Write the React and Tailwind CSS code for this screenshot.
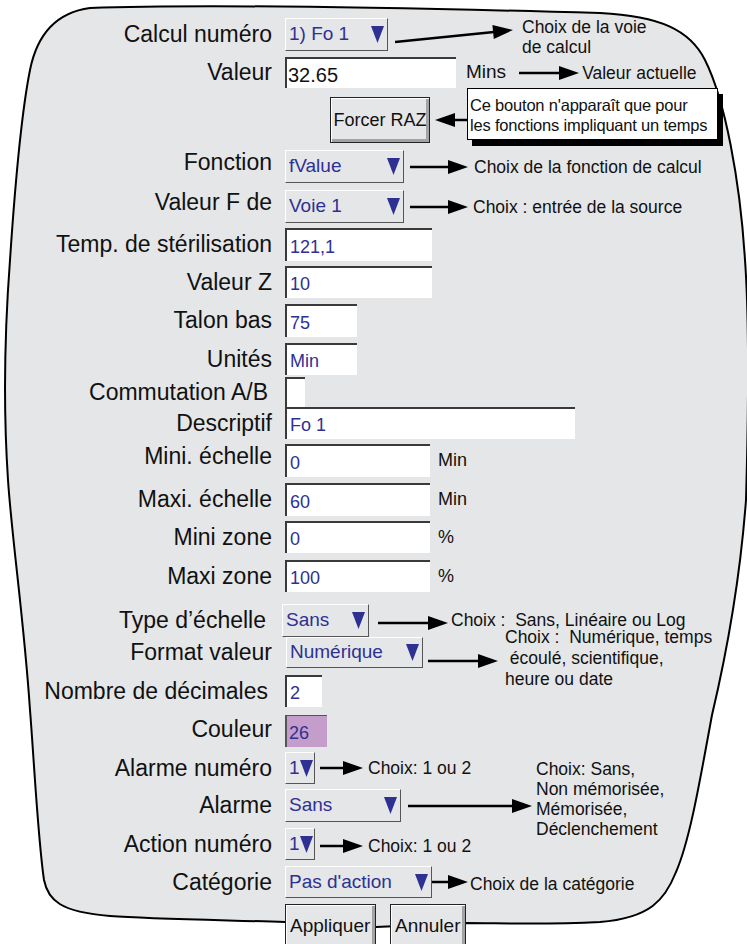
import React from 'react';

const OUTLINE =
  'M 90 8 C 200 4, 420 8, 600 13 C 660 16, 690 30, 705 60 C 725 100, 740 180, 745 260 ' +
  'C 750 330, 748 430, 746 500 C 740 580, 725 660, 712 715 C 700 780, 690 840, 676 872 ' +
  'C 665 900, 650 918, 600 922 C 540 925, 500 923, 466 923 L 376 927 L 285 922 ' +
  'C 220 920, 150 919, 110 916 C 60 912, 48 900, 44 880 C 38 840, 34 760, 30 710 ' +
  'C 24 620, 12 540, 8 480 C 4 420, 4 340, 10 260 C 14 200, 20 120, 30 70 C 38 30, 60 12, 90 8 Z';

function Tri() {
  return (
    <svg width="13" height="17" viewBox="0 0 13 17" className="shrink-0">
      <polygon points="0,0 13,0 6.5,17" fill="#2e3192" />
    </svg>
  );
}

function Arrow({ w, left = false, className = '' }) {
  return (
    <svg width={w} height="14" viewBox={`0 0 ${w} 14`} className={`shrink-0 ${className}`}>
      {left ? (
        <>
          <line x1="18" y1="7" x2={w} y2="7" stroke="#000" strokeWidth="2.5" />
          <polygon points="0,7 20,0 20,14" fill="#000" />
        </>
      ) : (
        <>
          <line x1="0" y1="7" x2={w - 18} y2="7" stroke="#000" strokeWidth="2.5" />
          <polygon points={`${w - 20},0 ${w},7 ${w - 20},14`} fill="#000" />
        </>
      )}
    </svg>
  );
}

function Select({ value, className = '' }) {
  return (
    <div
      className={`h-full flex items-center justify-between bg-[#e5e6e8] border border-t-white border-l-white border-r-[#555] border-b-[#555] pl-[3px] pr-[3px] text-[19px] text-[#2e3192] whitespace-nowrap ${className}`}
    >
      <span>{value}</span>
      <Tri />
    </div>
  );
}

function Input({ value, className = '' }) {
  return (
    <div
      className={`h-full flex items-center bg-white border-t-2 border-l-2 border-[#3a3a3a] pl-[3px] pt-[3px] text-[18px] text-[#2e3192] whitespace-nowrap ${className}`}
    >
      {value}
    </div>
  );
}

function Note({ children, className = '' }) {
  return <div className={`text-[17.5px] text-[#111] whitespace-pre leading-[20px] ${className}`}>{children}</div>;
}

function Row({ rowH, fieldH, label, labelCls = '', fieldCls = 'ml-[13px]', children }) {
  return (
    <div className={`flex shrink-0 ${rowH}`}>
      <div
        className={`w-[272px] ${fieldH} flex items-center justify-end text-[23px] leading-none text-[#111] whitespace-nowrap ${labelCls}`}
      >
        {label}
      </div>
      <div className={`${fieldH} flex items-center ${fieldCls}`}>{children}</div>
    </div>
  );
}

function Btn({ children, className = '' }) {
  return (
    <div
      className={`bg-[#e5e6e8] border border-[#222] shadow-[inset_1px_1px_0_#fff,inset_-3px_-3px_0_#a3a3a3] text-[#111] whitespace-nowrap ${className}`}
    >
      {children}
    </div>
  );
}

export default function App() {
  return (
    <div className="relative w-[747px] h-[944px] overflow-hidden bg-white font-['Liberation_Sans',Arial,sans-serif]">
      <svg className="absolute inset-0" width="747" height="944" viewBox="0 0 747 944">
        <path d={OUTLINE} fill="#e5e6e8" stroke="#000" strokeWidth="2" />
      </svg>

      <div className="relative flex flex-col pt-[18px]">
        <Row rowH="h-[39px]" fieldH="h-[33px]" label="Calcul numéro">
          <Select value="1) Fo 1" className="w-[103px]" />
          <svg width="120" height="33" viewBox="0 0 120 33" className="shrink-0 ml-[7px] self-start">
            <line x1="0" y1="24" x2="99" y2="14" stroke="#000" strokeWidth="2.5" />
            <polygon points="118,12 98.8,21 97.4,7" fill="#000" />
          </svg>
          <Note className="self-start mt-[-1px] ml-[7px]">{'Choix de la voie\nde calcul'}</Note>
        </Row>

        <Row rowH="h-[40px]" fieldH="h-[31px]" label="Valeur">
          <div className="h-full w-[171px] flex items-center bg-white border-t-2 border-l-2 border-[#3a3a3a] pl-[1px] pt-[2px] text-[20px] text-[#111]">
            32.65
          </div>
          <span className="ml-[10px] text-[19px] text-[#111]">Mins</span>
          <Arrow w={60} className="ml-[13px]" />
          <Note className="ml-[3px]">Valeur actuelle</Note>
        </Row>

        <Row rowH="h-[53px]" fieldH="h-[46px]" label="">
          <Btn className="ml-[45px] w-[100px] h-full flex items-center justify-center text-[18px]">Forcer RAZ</Btn>
          <Arrow w={32} left className="ml-[5px]" />
          <div className="self-start mt-[-9px] w-[251px] h-[52px] bg-white border border-black shadow-[5px_6px_0_#000] pl-[2px] pt-[6px] text-[16.5px] leading-[20px] text-[#111] whitespace-nowrap tracking-[-0.2px]">
            <div>Ce bouton n'apparaît que pour</div>
            <div>les fonctions impliquant un temps</div>
          </div>
        </Row>

        <Row rowH="h-[40px]" fieldH="h-[33px]" label="Fonction" labelCls="pb-[8px]">
          <Select value="fValue" className="w-[119px]" />
          <Arrow w={58} className="ml-[6px]" />
          <Note className="ml-[6px]">Choix de la fonction de calcul</Note>
        </Row>

        <Row rowH="h-[38px]" fieldH="h-[33px]" label="Valeur F de" labelCls="pb-[8px]">
          <Select value="Voie 1" className="w-[119px]" />
          <Arrow w={58} className="ml-[6px]" />
          <Note className="ml-[5px]">Choix : entrée de la source</Note>
        </Row>

        <Row rowH="h-[38px]" fieldH="h-[33px]" label="Temp. de stérilisation">
          <Input value="121,1" className="w-[147px]" />
        </Row>

        <Row rowH="h-[38px]" fieldH="h-[32px]" label="Valeur Z">
          <Input value="10" className="w-[147px]" />
        </Row>

        <Row rowH="h-[39px]" fieldH="h-[33px]" label="Talon bas">
          <Input value="75" className="w-[72px]" />
        </Row>

        <Row rowH="h-[34px]" fieldH="h-[32px]" label="Unités">
          <Input value="Min" className="w-[72px]" />
        </Row>

        <Row rowH="h-[30px]" fieldH="h-[31px]" label="Commutation A/B" labelCls="pr-[4px]">
          <Input value="" className="w-[20px]" />
        </Row>

        <Row rowH="h-[37px]" fieldH="h-[32px]" label="Descriptif">
          <Input value="Fo 1" className="w-[290px]" />
        </Row>

        <Row rowH="h-[39px]" fieldH="h-[33px]" label="Mini. échelle" labelCls="pb-[8px]">
          <Input value="0" className="w-[145px]" />
          <span className="ml-[8px] text-[18px] text-[#111]">Min</span>
        </Row>

        <Row rowH="h-[38px]" fieldH="h-[33px]" label="Maxi. échelle">
          <Input value="60" className="w-[145px]" />
          <span className="ml-[8px] text-[18px] text-[#111]">Min</span>
        </Row>

        <Row rowH="h-[39px]" fieldH="h-[32px]" label="Mini zone">
          <Input value="0" className="w-[145px]" />
          <span className="ml-[8px] text-[18px] text-[#111]">%</span>
        </Row>

        <Row rowH="h-[44px]" fieldH="h-[32px]" label="Maxi zone">
          <Input value="100" className="w-[145px]" />
          <span className="ml-[8px] text-[18px] text-[#111]">%</span>
        </Row>

        <Row rowH="h-[33px]" fieldH="h-[33px]" label="Type d’échelle" labelCls="pr-[6px]" fieldCls="ml-[10px]">
          <Select value="Sans" className="w-[87px]" />
          <Arrow w={70} className="ml-[9px] mt-[4px]" />
          <Note className="ml-[3px] mt-[-2px]">{'Choix :  Sans, Linéaire ou Log'}</Note>
        </Row>

        <Row rowH="h-[38px]" fieldH="h-[31px]" label="Format valeur" fieldCls="ml-[14px]">
          <Select value="Numérique" className="w-[137px]" />
          <Arrow w={70} className="ml-[5px] mt-[16px]" />
          <Note className="self-start mt-[-10px] ml-[7px] leading-[21px]">
            {'Choix :  Numérique, temps\n écoulé, scientifique,\nheure ou date'}
          </Note>
        </Row>

        <Row rowH="h-[40px]" fieldH="h-[32px]" label="Nombre de décimales" labelCls="pr-[4px]">
          <Input value="2" className="w-[37px]" />
        </Row>

        <Row rowH="h-[37px]" fieldH="h-[32px]" label="Couleur" labelCls="pb-[4px]">
          <div className="h-full w-[42px] flex items-center bg-[#c49dca] border-t border-l-2 border-[#555] pl-[2px] pt-[3px] text-[18px] text-[#2e3192]">
            26
          </div>
        </Row>

        <Row rowH="h-[37px]" fieldH="h-[32px]" label="Alarme numéro">
          <Select value="1" className="w-[30px] pl-[2px] pr-[1px]" />
          <Arrow w={43} className="ml-[5px]" />
          <Note className="ml-[5px]">Choix: 1 ou 2</Note>
        </Row>

        <Row rowH="h-[39px]" fieldH="h-[33px]" label="Alarme">
          <Select value="Sans" className="w-[116px]" />
          <Arrow w={124} className="ml-[7px]" />
          <Note className="self-start mt-[-30px] ml-[4px] leading-[19.5px]">
            {'Choix: Sans,\nNon mémorisée,\nMémorisée,\nDéclenchement'}
          </Note>
        </Row>

        <Row rowH="h-[38px]" fieldH="h-[32px]" label="Action numéro">
          <Select value="1" className="w-[30px] pl-[2px] pr-[1px]" />
          <Arrow w={43} className="ml-[5px] mt-[4px]" />
          <Note className="ml-[5px] mt-[4px]">Choix: 1 ou 2</Note>
        </Row>

        <Row rowH="h-[38px]" fieldH="h-[32px]" label="Catégorie">
          <Select value="Pas d'action" className="w-[147px]" />
          <Arrow w={36} />
          <Note className="ml-[2px] mt-[4px]">Choix de la catégorie</Note>
        </Row>

        <div className="flex">
          <div className="w-[272px]" />
          <div className="ml-[13px] flex">
            <Btn className="w-[91px] h-[50px] pl-[4px] pt-[7px] text-[19px]">Appliquer</Btn>
            <Btn className="ml-[14px] w-[76px] h-[50px] pl-[4px] pt-[7px] text-[19px]">Annuler</Btn>
          </div>
        </div>
      </div>
    </div>
  );
}
